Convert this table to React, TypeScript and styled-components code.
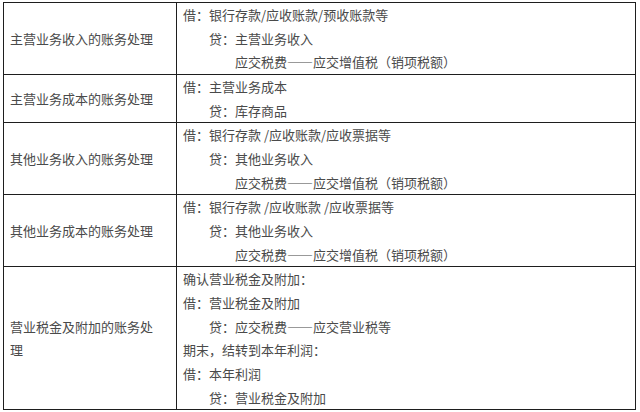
import React from "react";
import styled, { createGlobalStyle } from "styled-components";

const Global = createGlobalStyle`
  html, body { margin: 0; padding: 0; background: #ffffff; }
  body { font-family: "Noto Sans CJK SC", "Noto Sans", sans-serif; }
`;

const Table = styled.div`
  margin: 2px 0 0 3px;
  width: 633px;
  box-sizing: border-box;
  display: grid;
  grid-template-columns: 173px 459px;
  border-top: 1px solid #1e1e1e;
  border-left: 1px solid #1e1e1e;
  font-family: "Noto Sans CJK SC", "Noto Sans", sans-serif;
  font-size: 13px;
  line-height: 23.67px;
  color: #4a4a4a;
`;

const Cell = styled.div`
  box-sizing: border-box;
  border-right: 1px solid #1e1e1e;
  border-bottom: 1px solid #1e1e1e;
  padding: 0 6px;
`;

const LabelCell = styled(Cell)`
  display: flex;
  align-items: center;
  padding-right: 14px;
`;

const Line = styled.div<{ $indent?: number }>`
  white-space: nowrap;
  padding-left: ${(p) => (p.$indent ?? 0) * 13}px;
`;

type Entry = { text: string; indent?: number };
type Row = { label: string; lines: Entry[] };

const rows: Row[] = [
  {
    label: "主营业务收入的账务处理",
    lines: [
      { text: "借：银行存款/应收账款/预收账款等" },
      { text: "贷：主营业务收入", indent: 2 },
      { text: "应交税费——应交增值税（销项税额）", indent: 4 },
    ],
  },
  {
    label: "主营业务成本的账务处理",
    lines: [
      { text: "借：主营业务成本" },
      { text: "贷：库存商品", indent: 2 },
    ],
  },
  {
    label: "其他业务收入的账务处理",
    lines: [
      { text: "借：银行存款 /应收账款/应收票据等" },
      { text: "贷：其他业务收入", indent: 2 },
      { text: "应交税费——应交增值税（销项税额）", indent: 4 },
    ],
  },
  {
    label: "其他业务成本的账务处理",
    lines: [
      { text: "借：银行存款 /应收账款 /应收票据等" },
      { text: "贷：其他业务收入", indent: 2 },
      { text: "应交税费——应交增值税（销项税额）", indent: 4 },
    ],
  },
  {
    label: "营业税金及附加的账务处理",
    lines: [
      { text: "确认营业税金及附加：" },
      { text: "借：营业税金及附加" },
      { text: "贷：应交税费——应交营业税等", indent: 2 },
      { text: "期末，结转到本年利润：" },
      { text: "借：本年利润" },
      { text: "贷：营业税金及附加", indent: 2 },
    ],
  },
];

export default function App() {
  return (
    <>
      <Global />
      <Table lang="zh-CN">
        {rows.map((r, i) => (
          <React.Fragment key={i}>
            <LabelCell>
              <span>{r.label}</span>
            </LabelCell>
            <Cell>
              {r.lines.map((l, j) => (
                <Line key={j} $indent={l.indent}>
                  {l.text}
                </Line>
              ))}
            </Cell>
          </React.Fragment>
        ))}
      </Table>
    </>
  );
}
